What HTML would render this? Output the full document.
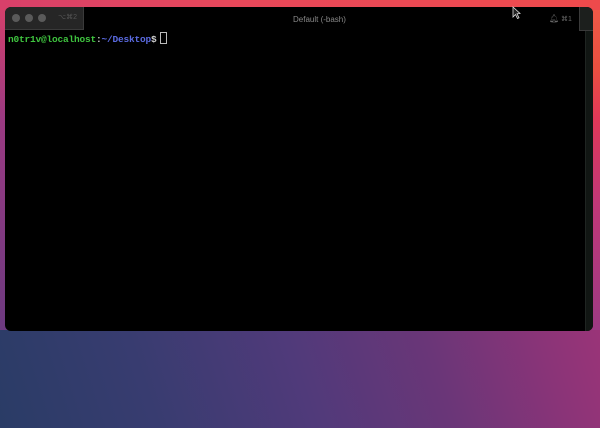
<!DOCTYPE html>
<html><head><style>
html,body{margin:0;padding:0;width:600px;height:428px;overflow:hidden}
body{position:relative;background:#000;font-family:"Liberation Sans",sans-serif}
.l{position:absolute;left:0;top:0;width:8px;height:340px;background:linear-gradient(180deg,#d8406a 0%,#9a3a82 35%,#6a3a80 100%)}
.r{position:absolute;right:0;top:0;width:10px;height:340px;background:linear-gradient(180deg,#f05a48 0%,#e85040 20%,#e03858 35%,#c03878 60%,#9a3a84 100%)}
.tp{position:absolute;left:0;top:0;width:600px;height:10px;background:linear-gradient(90deg,#d8406a,#e8485a 40%,#ee4a4c 100%)}
.bg2{position:absolute;left:0;top:330px;width:600px;height:98px;background:linear-gradient(72deg,#2a3c66 0%,#383c70 25%,#503a7a 50%,#6a3678 72%,#8a3478 90%,#9a3478 100%)}
.win{position:absolute;left:5px;top:7px;width:588px;height:324px;background:#000;border-radius:6px;overflow:hidden}
.tab{position:absolute;left:0;top:0;width:78px;height:22px;background:#262626;border-right:1px solid #3a3a3a;border-bottom:1px solid #3a3a3a}
.dot{position:absolute;top:7px;width:8px;height:8px;border-radius:50%;background:#5a5a5a}
.rt{position:absolute;right:0;top:0;width:13px;height:23px;background:#1c1f1d;border-left:1px solid #3a3a3a;border-bottom:1px solid #3a3a3a}
.sb{position:absolute;right:0;top:24px;width:7px;bottom:0;background:#111613;border-left:1px solid #1f2421}
.t{position:absolute;font-size:8px;color:#777}
.line{position:absolute;left:3px;top:25px;font-family:"Liberation Mono",monospace;font-size:9.5px;font-weight:bold;letter-spacing:-0.2px}
.cur{display:inline-block;width:5px;height:10px;border:1px solid #bbb;vertical-align:-2px;margin-left:3px}
</style></head><body>
<div class="l"></div><div class="r"></div><div class="tp"></div>
<div class="bg2"></div>
<div class="win">
<div class="tab"><div class="dot" style="left:7px"></div><div class="dot" style="left:20px"></div><div class="dot" style="left:33px"></div><span class="t" style="left:53px;top:6px;color:#555;font-size:7px">⌥⌘2</span></div>
<span class="t" style="left:288px;top:8px;color:#888">Default (-bash)</span>
<span class="t" style="left:544px;top:7px;color:#666">🔔︎</span>
<span class="t" style="left:556px;top:8px;color:#666;font-size:7px">⌘1</span>
<div class="rt"></div><div class="sb"></div>
<div class="line"><span style="color:#3fc43f">n0tr1v@localhost</span><span style="color:#ccc">:</span><span style="color:#5a6ae0">~/Desktop</span><span style="color:#ccc">$</span><span class="cur"></span></div>
</div>
<svg style="position:absolute;left:512px;top:6px" width="9" height="13" viewBox="0 0 9 13"><path d="M1 1 L1 11 L3.5 8.5 L5.5 12.5 L7 11.8 L5 7.8 L8 7.5 Z" fill="#222" stroke="#ddd" stroke-width="0.8"/></svg>
</body></html>
